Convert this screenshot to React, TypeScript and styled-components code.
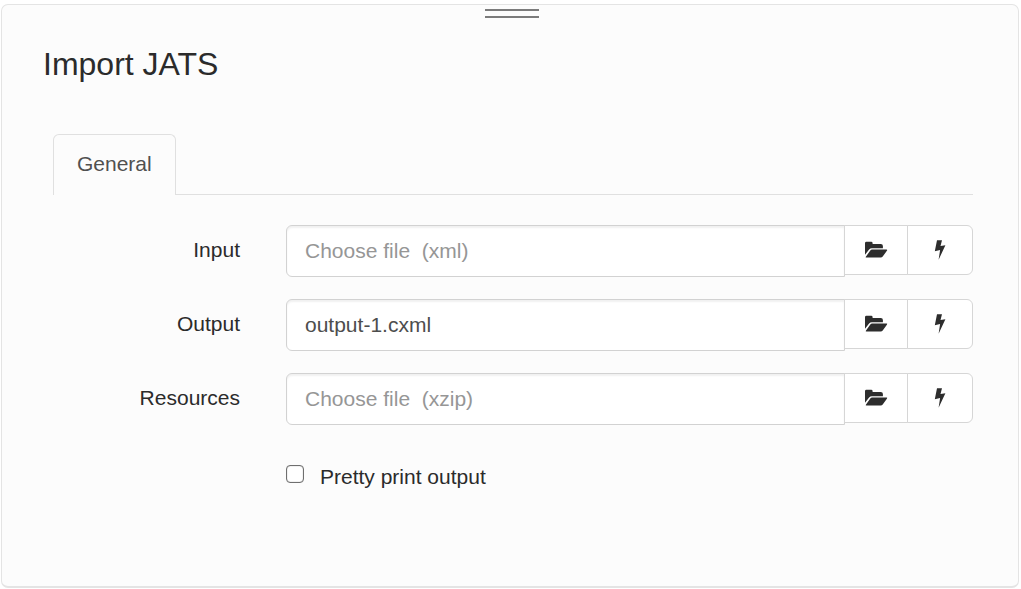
import React, { useState } from "react";
import styled, { createGlobalStyle } from "styled-components";

const GlobalStyle = createGlobalStyle`
  *, *::before, *::after { box-sizing: border-box; }
  body {
    margin: 0;
    background: #ffffff;
    color: #2b2b2b;
    font-family: "Liberation Sans", Arial, Helvetica, sans-serif;
    font-size: 21px;
    line-height: 30px;
  }
`;

const Page = styled.div`
  display: flex;
  flex-direction: column;
  min-height: 100vh;
  padding: 4px 2px 1px 1px;
`;

const Panel = styled.section`
  display: flex;
  flex-direction: column;
  flex: 1;
  padding: 4px 45px 40px 41px;
  background: #fcfcfc;
  border: 1px solid #e4e4e4;
  border-bottom-width: 2px;
  border-radius: 7px;
`;

const DragHandle = styled.div`
  width: 54px;
  height: 9px;
  margin: 0 auto;
  border: solid #7b7b7b;
  border-width: 2px 0;
`;

const HandleBar = styled.div`
  padding-left: 8px;
`;

const Title = styled.h1`
  margin: 26px 0 50px;
  font-size: 32px;
  line-height: 40px;
  font-weight: 400;
`;

const Content = styled.div`
  margin-left: 10px;
`;

const TabList = styled.div`
  display: flex;
  border-bottom: 1px solid #e0e0e0;
`;

const Tab = styled.button`
  height: 61px;
  margin-bottom: -1px;
  padding: 0 23px 2px;
  background: #fcfcfc;
  border: 1px solid #e0e0e0;
  border-bottom: 0;
  border-radius: 6px 6px 0 0;
  color: #505050;
  font: inherit;
`;

const Form = styled.form`
  display: flex;
  flex-direction: column;
  gap: 22px;
  padding-top: 30px;
`;

const Row = styled.div`
  display: grid;
  grid-template-columns: 187px 1fr;
  column-gap: 46px;
`;

const FieldLabel = styled.label`
  padding-top: 10px;
  text-align: right;
`;

const InputGroup = styled.div`
  display: flex;
  align-items: flex-start;
`;

const FileInput = styled.input`
  flex: 1;
  min-width: 0;
  height: 52px;
  padding: 0 18px;
  background: #ffffff;
  border: 1px solid #d2d2d2;
  border-radius: 6px 0 0 6px;
  box-shadow: inset 0 2px 2px rgba(0, 0, 0, 0.06);
  color: #4d4d4d;
  font: inherit;

  &::placeholder {
    color: #969696;
    opacity: 1;
    white-space: pre;
  }
`;

const IconButton = styled.button<{ $last?: boolean }>`
  display: flex;
  align-items: center;
  justify-content: center;
  width: ${({ $last }) => ($last ? 66 : 64)}px;
  height: 50px;
  margin-left: -1px;
  padding: 0;
  background: #ffffff;
  border: 1px solid #d6d6d6;
  border-radius: ${({ $last }) => ($last ? "0 6px 6px 0" : "0")};
  color: #2d2d2d;
`;

const CheckRow = styled.div`
  display: flex;
  align-items: center;
  gap: 16px;
  margin: 15px 0 0 233px;
`;

const Checkbox = styled.input`
  appearance: none;
  width: 18px;
  height: 18px;
  margin: 0 0 6px;
  background: #ffffff;
  border: 1px solid #6f6f6f;
  border-radius: 4px;
  box-shadow: inset 0 0 1px #6f6f6f;

  &:checked {
    background: #3276b1;
  }
`;

const FolderIcon = () => (
  <svg width="24" height="18" viewBox="0 0 24 18" fill="currentColor" aria-hidden="true">
    <path d="M1 2.2Q1 .8 2.4.8H7.2Q8.6.8 8.6 2.2V3.1H16.8Q18.9 3.1 18.9 5V7.2H7.8Q6.2 7.2 5.1 8.5L1 13.7Z" />
    <path d="M8.1 8.6H22.6Q23.7 8.6 22.9 9.7L18.7 15.6Q18 16.6 16.7 16.6H2.4Q1.2 16.6 2 15.5L6.3 9.6Q7 8.6 8.1 8.6Z" />
  </svg>
);

const BoltIcon = () => (
  <svg width="12" height="20" viewBox="0 0 12 20" fill="currentColor" aria-hidden="true">
    <path d="M3 .3H8L6.5 6.1 11.4 5.2 4.6 19.8 6.1 9.9.8 11.3Z" />
  </svg>
);

interface FileFieldProps {
  id: string;
  label: string;
  placeholder: string;
  initial?: string;
}

function FileField({ id, label, placeholder, initial = "" }: FileFieldProps) {
  const [value, setValue] = useState(initial);
  return (
    <Row>
      <FieldLabel htmlFor={id}>{label}</FieldLabel>
      <InputGroup>
        <FileInput
          id={id}
          type="text"
          placeholder={placeholder}
          value={value}
          onChange={(e) => setValue(e.target.value)}
        />
        <IconButton type="button" aria-label={`Browse for ${label}`}>
          <FolderIcon />
        </IconButton>
        <IconButton type="button" $last aria-label={`Bind ${label}`}>
          <BoltIcon />
        </IconButton>
      </InputGroup>
    </Row>
  );
}

export default function App() {
  return (
    <>
      <GlobalStyle />
      <Page>
        <Panel>
          <HandleBar>
            <DragHandle />
          </HandleBar>
          <Title>Import JATS</Title>
          <Content>
            <TabList role="tablist">
              <Tab type="button" role="tab" aria-selected="true">
                General
              </Tab>
            </TabList>
            <Form>
              <FileField id="input" label="Input" placeholder={"Choose file \u00a0(xml)"} />
              <FileField
                id="output"
                label="Output"
                placeholder={"Choose file \u00a0(cxml)"}
                initial="output-1.cxml"
              />
              <FileField id="resources" label="Resources" placeholder={"Choose file \u00a0(xzip)"} />
              <CheckRow>
                <Checkbox id="pretty" type="checkbox" />
                <label htmlFor="pretty">Pretty print output</label>
              </CheckRow>
            </Form>
          </Content>
        </Panel>
      </Page>
    </>
  );
}
